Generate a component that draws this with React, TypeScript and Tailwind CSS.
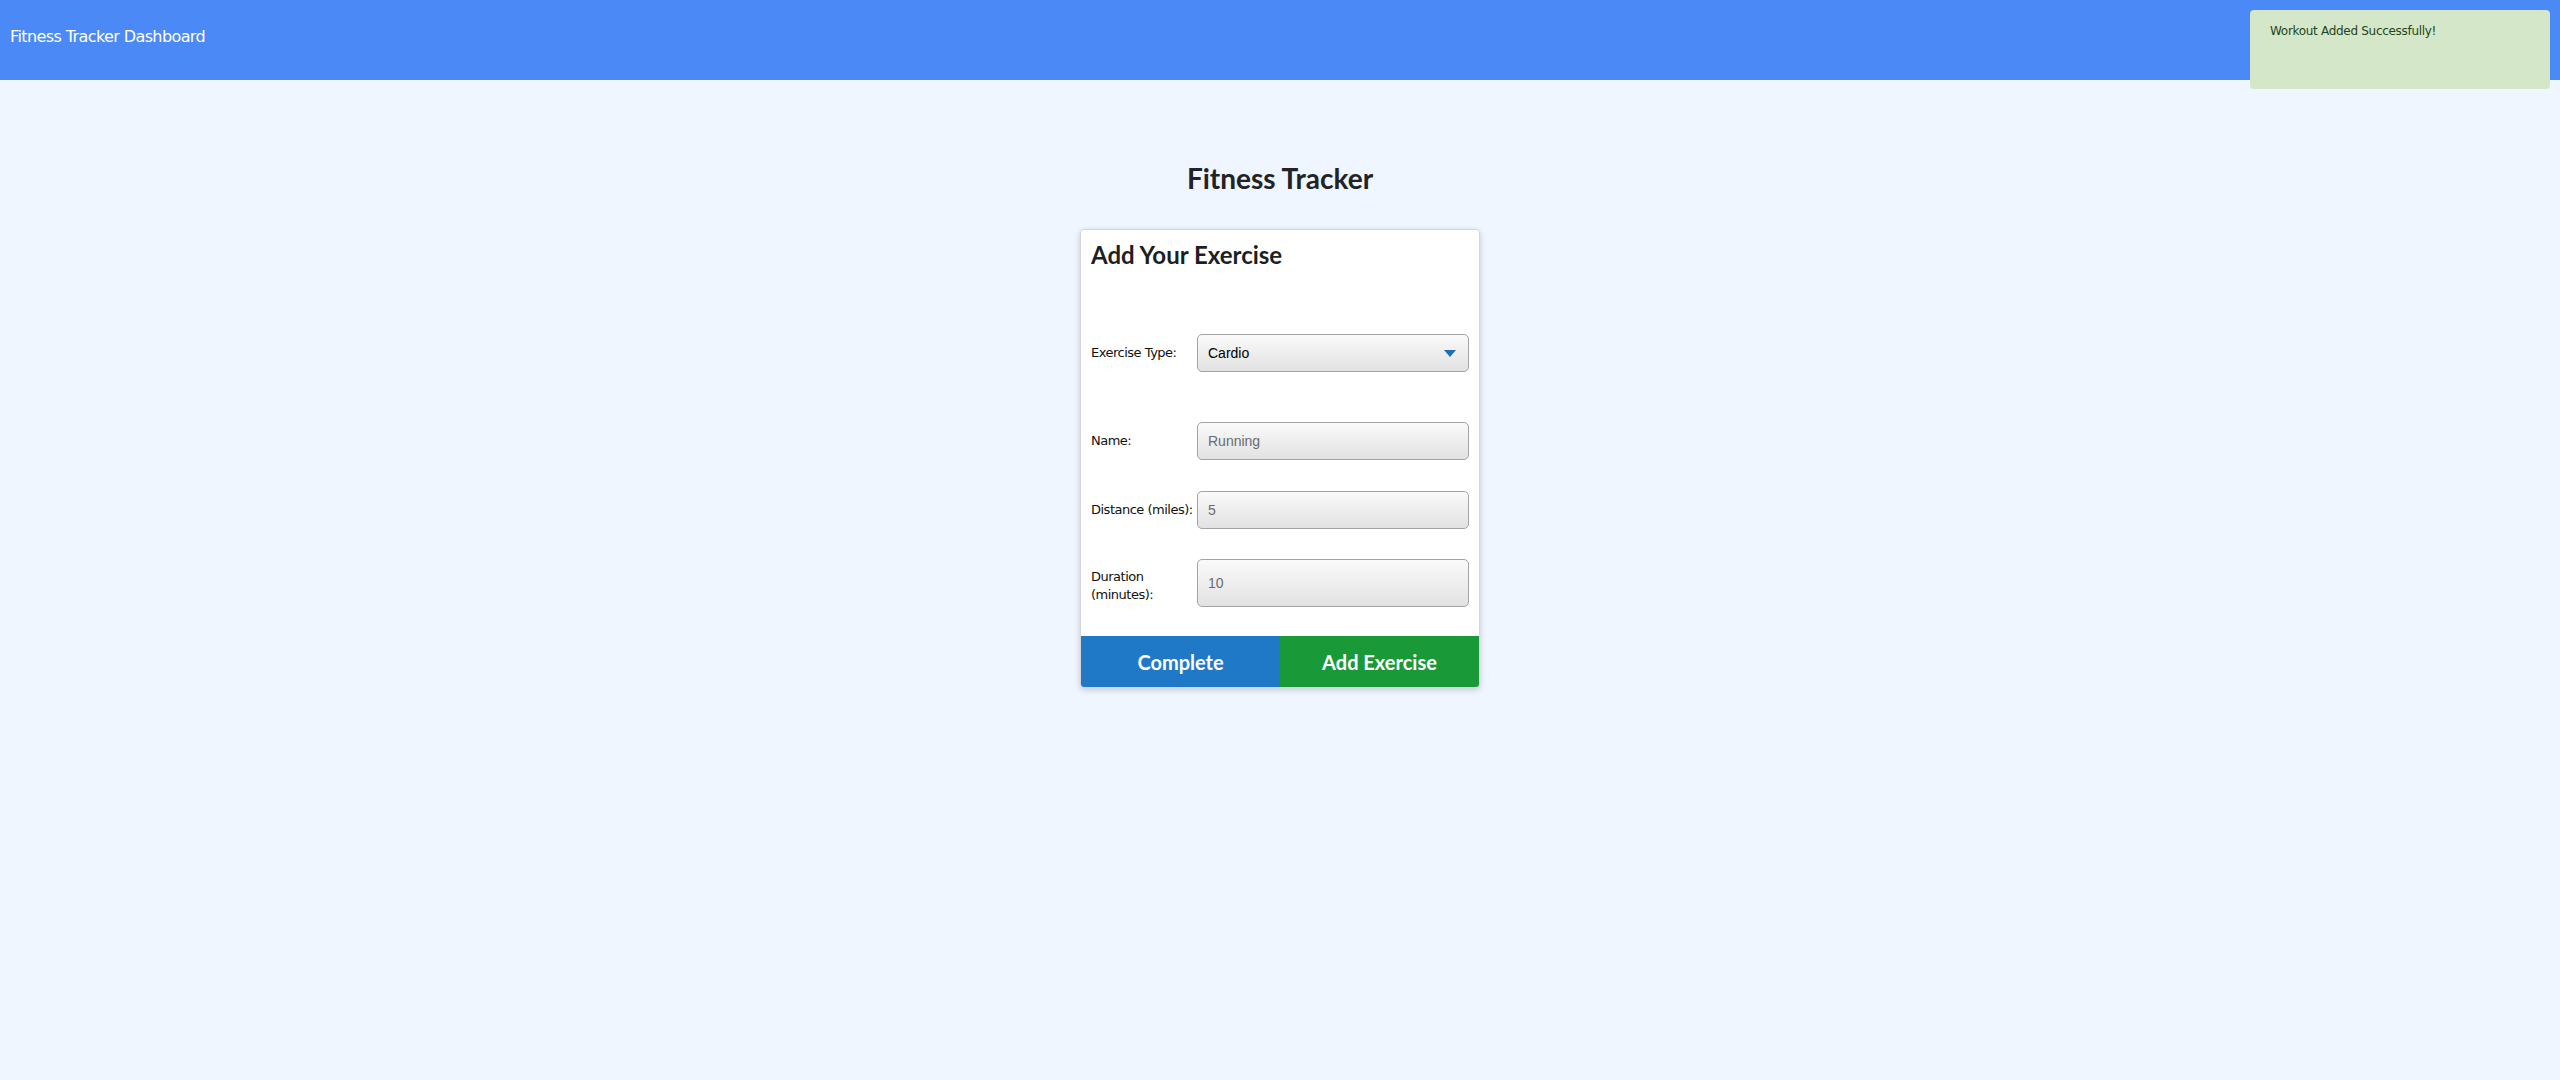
const inputCls = "h-[38px] w-[273px] rounded-[5px] border border-[#a3a3a3] bg-gradient-to-b from-[#fafafa] to-[#e2e2e2] px-[10px] text-[14px] text-[#6b6b6b] outline-none [font-family:'Liberation_Sans',Arial,sans-serif]";

export default function App() {
  return (
    <div className="min-h-[1080px] bg-[#eff6ff] [font-family:'DejaVu_Sans',sans-serif]">
      <header className="relative h-[80px] bg-[#4b8af6]">
        <p className="px-[10px] pt-[25px] text-[16px] tracking-[-0.6px] text-white">Fitness Tracker Dashboard</p>
        <div className="absolute right-[10px] top-[10px] h-[79px] w-[300px] rounded-[4px] bg-[#d4e7c9] px-[20px] pt-[12px] text-[12px] tracking-[-0.3px] text-[#1f4420]">Workout Added Successfully!</div>
      </header>
      <main className="flex flex-col items-center">
        <h1 className="mt-[80px] text-[28px] font-bold leading-[36px] text-[#212326] [font-family:Lato,sans-serif]">Fitness Tracker</h1>
        <ExerciseCard />
      </main>
    </div>
  );
}

function ExerciseCard() {
  return (
    <section className="mt-[33px] w-[400px] overflow-hidden rounded-[4px] border border-[#d6d6d6] bg-white shadow-[0_2px_6px_rgba(0,0,0,0.18)]">
      <h2 className="px-[10px] pt-[9px] text-[24px] font-bold leading-[32px] text-[#1d1f22] [font-family:Lato,sans-serif]">Add Your Exercise</h2>
      <div className="px-[10px] pt-[63px]">
        <Row label="Exercise Type:">
          <div className={`${inputCls} flex items-center justify-between text-black`}>
            <span>Cardio</span>
            <svg width="12" height="7" viewBox="0 0 12 7" className="mr-[2px]"><path d="M0 0h12L6 7z" fill="#1f6fb0" /></svg>
          </div>
        </Row>
        <Row label="Name:" className="mt-[50px]"><input readOnly value="Running" className={inputCls} /></Row>
        <Row label="Distance (miles):" className="mt-[31px]"><input readOnly value="5" className={inputCls} /></Row>
        <Row label={<>Duration<br />(minutes):</>} labelCls="pt-[6px]" className="mt-[30px]"><input readOnly value="10" className={`${inputCls} h-[48px]`} /></Row>
      </div>
      <div className="mt-[29px] grid grid-cols-2 [font-family:Lato,sans-serif] text-[20px] font-bold text-white">
        <button className="h-[51px] bg-[#2079c7]">Complete</button>
        <button className="h-[51px] bg-[#1a9938]">Add Exercise</button>
      </div>
    </section>
  );
}

function Row({ label, children, className = "", labelCls = "" }: { label: React.ReactNode; children: React.ReactNode; className?: string; labelCls?: string }) {
  return (
    <div className={`flex items-center ${className}`}>
      <label className={`w-[106px] shrink-0 text-[13px] leading-[18px] tracking-[-0.5px] text-[#111] ${labelCls}`}>{label}</label>
      {children}
    </div>
  );
}
